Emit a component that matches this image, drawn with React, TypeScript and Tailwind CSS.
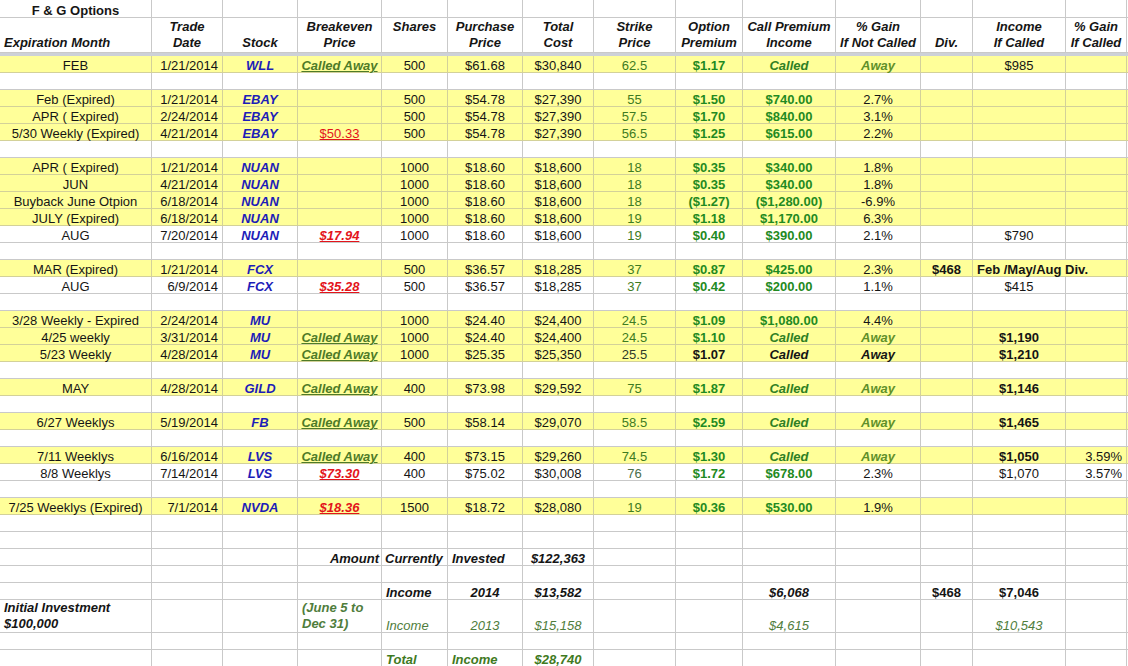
import React from 'react';

type Cell = { t: React.ReactNode; cls?: string; nr?: boolean } | null;

// column widths copied from the sheet (right gridline included)
const W = [
  'w-[152px]', 'w-[71px]', 'w-[75px]', 'w-[84px]', 'w-[66px]', 'w-[75px]', 'w-[71px]',
  'w-[82px]', 'w-[67px]', 'w-[93px]', 'w-[85px]', 'w-[52px]', 'w-[93px]', 'w-[61px]',
];

const C = 'justify-center';
const R = 'justify-end pr-[4px]';
const L = 'justify-start pl-[4px]';
const STOCK = 'justify-center font-bold italic text-[#1d1db8]';
const LINK = 'justify-center font-bold italic underline text-[#4e7b28]';
const RED = 'justify-center font-bold italic underline text-[#e3141b]';
const STRIKE = 'justify-center text-[#3e7b22]';
const PREM = 'justify-center font-bold text-[#1f8a22]';
const CALLED = 'justify-center font-bold italic text-[#2f7f24]';
const AWAY = 'justify-center font-bold italic text-[#5f902a]';
const BOLD = 'justify-center font-bold';

const t = (text: React.ReactNode, cls = C): Cell => ({ t: text, cls });

type Row = { y?: boolean; tall?: boolean; cells?: Cell[] };

const base = (
  month: string, date: string, stock: string, be: Cell, shares: string, pp: string, tc: string,
  strike: Cell, prem: Cell, cpi: Cell, gain: Cell, rest: Cell[] = [],
): Cell[] => [
  t(month), t(date, R), t(stock, STOCK), be, t(shares), t(pp), t(tc), strike, prem, cpi, gain, ...rest,
];

const ROWS: Row[] = [
  { y: true, cells: base('FEB', '1/21/2014', 'WLL', t('Called Away', LINK), '500', '$61.68', '$30,840', t('62.5', STRIKE), t('$1.17', PREM), t('Called', CALLED), t('Away', AWAY), [null, t('$985')]) },
  {},
  { y: true, cells: base('Feb (Expired)', '1/21/2014', 'EBAY', null, '500', '$54.78', '$27,390', t('55', STRIKE), t('$1.50', PREM), t('$740.00', PREM), t('2.7%')) },
  { y: true, cells: base('APR ( Expired)', '2/24/2014', 'EBAY', null, '500', '$54.78', '$27,390', t('57.5', STRIKE), t('$1.70', PREM), t('$840.00', PREM), t('3.1%')) },
  { y: true, cells: base('5/30 Weekly (Expired)', '4/21/2014', 'EBAY', t('$50.33', 'justify-center underline text-[#e3141b]'), '500', '$54.78', '$27,390', t('56.5', STRIKE), t('$1.25', PREM), t('$615.00', PREM), t('2.2%')) },
  {},
  { y: true, cells: base('APR ( Expired)', '1/21/2014', 'NUAN', null, '1000', '$18.60', '$18,600', t('18', STRIKE), t('$0.35', PREM), t('$340.00', PREM), t('1.8%')) },
  { y: true, cells: base('JUN', '4/21/2014', 'NUAN', null, '1000', '$18.60', '$18,600', t('18', STRIKE), t('$0.35', PREM), t('$340.00', PREM), t('1.8%')) },
  { y: true, cells: base('Buyback June Otpion', '6/18/2014', 'NUAN', null, '1000', '$18.60', '$18,600', t('18', STRIKE), t('($1.27)', PREM), t('($1,280.00)', PREM), t('-6.9%')) },
  { y: true, cells: base('JULY (Expired)', '6/18/2014', 'NUAN', null, '1000', '$18.60', '$18,600', t('19', STRIKE), t('$1.18', PREM), t('$1,170.00', PREM), t('6.3%')) },
  { cells: base('AUG', '7/20/2014', 'NUAN', t('$17.94', RED), '1000', '$18.60', '$18,600', t('19', STRIKE), t('$0.40', PREM), t('$390.00', PREM), t('2.1%'), [null, t('$790')]) },
  {},
  { y: true, cells: base('MAR (Expired)', '1/21/2014', 'FCX', null, '500', '$36.57', '$18,285', t('37', STRIKE), t('$0.87', PREM), t('$425.00', PREM), t('2.3%'), [t('$468', BOLD), { t: 'Feb /May/Aug Div.', cls: 'justify-start pl-[4px] font-bold', nr: true }]) },
  { cells: base('AUG', '6/9/2014', 'FCX', t('$35.28', RED), '500', '$36.57', '$18,285', t('37', STRIKE), t('$0.42', PREM), t('$200.00', PREM), t('1.1%'), [null, t('$415')]) },
  {},
  { y: true, cells: base('3/28 Weekly - Expired', '2/24/2014', 'MU', null, '1000', '$24.40', '$24,400', t('24.5', STRIKE), t('$1.09', PREM), t('$1,080.00', PREM), t('4.4%')) },
  { y: true, cells: base('4/25 weekly', '3/31/2014', 'MU', t('Called Away', LINK), '1000', '$24.40', '$24,400', t('24.5', STRIKE), t('$1.10', PREM), t('Called', CALLED), t('Away', AWAY), [null, t('$1,190', BOLD)]) },
  { y: true, cells: base('5/23 Weekly', '4/28/2014', 'MU', t('Called Away', LINK), '1000', '$25.35', '$25,350', t('25.5', 'justify-center text-[#2e3a2a]'), t('$1.07', BOLD), t('Called', 'justify-center font-bold italic'), t('Away', 'justify-center font-bold italic'), [null, t('$1,210', BOLD)]) },
  {},
  { y: true, cells: base('MAY', '4/28/2014', 'GILD', t('Called Away', LINK), '400', '$73.98', '$29,592', t('75', STRIKE), t('$1.87', PREM), t('Called', CALLED), t('Away', AWAY), [null, t('$1,146', BOLD)]) },
  {},
  { y: true, cells: base('6/27 Weeklys', '5/19/2014', 'FB', t('Called Away', LINK), '500', '$58.14', '$29,070', t('58.5', STRIKE), t('$2.59', PREM), t('Called', CALLED), t('Away', AWAY), [null, t('$1,465', BOLD)]) },
  {},
  { y: true, cells: base('7/11 Weeklys', '6/16/2014', 'LVS', t('Called Away', LINK), '400', '$73.15', '$29,260', t('74.5', STRIKE), t('$1.30', PREM), t('Called', CALLED), t('Away', AWAY), [null, t('$1,050', BOLD), t('3.59%', R)]) },
  { cells: base('8/8 Weeklys', '7/14/2014', 'LVS', t('$73.30', RED), '400', '$75.02', '$30,008', t('76', 'justify-center text-[#4a6e4a]'), t('$1.72', PREM), t('$678.00', PREM), t('2.3%'), [null, t('$1,070'), t('3.57%', R)]) },
  {},
  { y: true, cells: base('7/25 Weeklys (Expired)', '7/1/2014', 'NVDA', t('$18.36', RED), '1500', '$18.72', '$28,080', t('19', STRIKE), t('$0.36', PREM), t('$530.00', PREM), t('1.9%')) },
  {},
  {},
  {
    cells: [null, null, null, t('Amount', 'justify-end pr-[2px] font-bold italic'), t('Currently', 'justify-start pl-[3px] font-bold italic'), t('Invested', L + ' font-bold italic'), t('$122,363', 'justify-center font-bold italic')],
  },
  {},
  {
    cells: [null, null, null, null, t('Income', L + ' font-bold italic'), t('2014', 'justify-center font-bold italic'), t('$13,582', 'justify-center font-bold italic'), null, null, t('$6,068', 'justify-center font-bold italic'), null, t('$468', BOLD), t('$7,046', BOLD)],
  },
  {
    tall: true,
    cells: [
      t(<span className="block leading-[16px]">Initial Investment<br />$100,000</span>, L + ' font-bold italic'),
      null,
      null,
      t(<span className="block leading-[16px]">(June 5 to<br />Dec 31)</span>, L + ' font-bold italic text-[#4f7d3c]'),
      t('Income', L + ' italic text-[#4f7d3c]'),
      t('2013', 'justify-center italic text-[#4f7d3c]'),
      t('$15,158', 'justify-center italic text-[#4f7d3c]'),
      null,
      null,
      t('$4,615', 'justify-center italic text-[#4f7d3c]'),
      null,
      null,
      t('$10,543', 'justify-center italic text-[#4f7d3c]'),
    ],
  },
  {},
  {
    cells: [null, null, null, null, t('Total', L + ' font-bold italic text-[#3f7a22]'), t('Income', L + ' font-bold italic text-[#3f7a22]'), t('$28,740', 'justify-center font-bold italic text-[#3f7a22]')],
  },
];

const HEAD: [string, string, string][] = [
  ['', 'Expiration Month', 'items-start pl-[4px]'],
  ['Trade', 'Date', 'items-center'],
  ['', 'Stock', 'items-center'],
  ['Breakeven', 'Price', 'items-center'],
  ['Shares', '', 'items-center'],
  ['Purchase', 'Price', 'items-center'],
  ['Total', 'Cost', 'items-center'],
  ['Strike', 'Price', 'items-center'],
  ['Option', 'Premium', 'items-center'],
  ['Call Premium', 'Income', 'items-center'],
  ['% Gain', 'If Not Called', 'items-center'],
  ['', 'Div.', 'items-center'],
  ['Income', 'If Called', 'items-center'],
  ['% Gain', 'If Called', 'items-center'],
];

function SheetRow({ y, tall, cells = [] }: Row) {
  const line = y ? 'border-[#d3d199]' : 'border-[#c9c9c9]';
  return (
    <div className={`flex ${tall ? 'h-[33px]' : 'h-[17px]'} ${y ? 'bg-[#ffff99]' : 'bg-white'}`}>
      {W.map((w, i) => {
        const c = cells[i];
        return (
          <div
            key={i}
            className={`${w} shrink-0 flex items-end leading-[13px] whitespace-nowrap border-b ${c?.nr ? '' : 'border-r'} ${line} ${c?.cls ?? ''}`}
          >
            {c?.t}
          </div>
        );
      })}
      <div className={`flex-1 border-b ${line}`} />
    </div>
  );
}

export default function App() {
  return (
    <div className="w-[1128px] h-[666px] overflow-hidden bg-white font-['Liberation_Sans',Arial,sans-serif] text-[13px] leading-[16px] text-[#151515]">
      {/* title row */}
      <div className="flex h-[18px]">
        {W.map((w, i) => (
          <div key={i} className={`${w} shrink-0 flex items-end justify-center leading-[13px] border-r border-b border-[#c9c9c9] font-bold`}>
            {i === 0 ? 'F & G Options' : ''}
          </div>
        ))}
        <div className="flex-1 border-b border-[#c9c9c9]" />
      </div>

      {/* two-line header */}
      <div className="flex h-[35px]">
        {HEAD.map(([a, b, cls], i) => (
          <div key={i} className={`${W[i]} shrink-0 flex flex-col justify-end pb-[1px] border-r border-b border-[#c9c9c9] font-bold italic whitespace-nowrap ${cls}`}>
            <span className="h-[17px] leading-[17px]">{a}</span>
            <span className="h-[16px] leading-[16px]">{b}</span>
          </div>
        ))}
        <div className="flex-1 border-b border-[#c9c9c9]" />
      </div>
      <div className="h-[3px] bg-[#cdd1d8]" />

      {ROWS.map((r, i) => (
        <SheetRow key={i} {...r} />
      ))}
    </div>
  );
}
